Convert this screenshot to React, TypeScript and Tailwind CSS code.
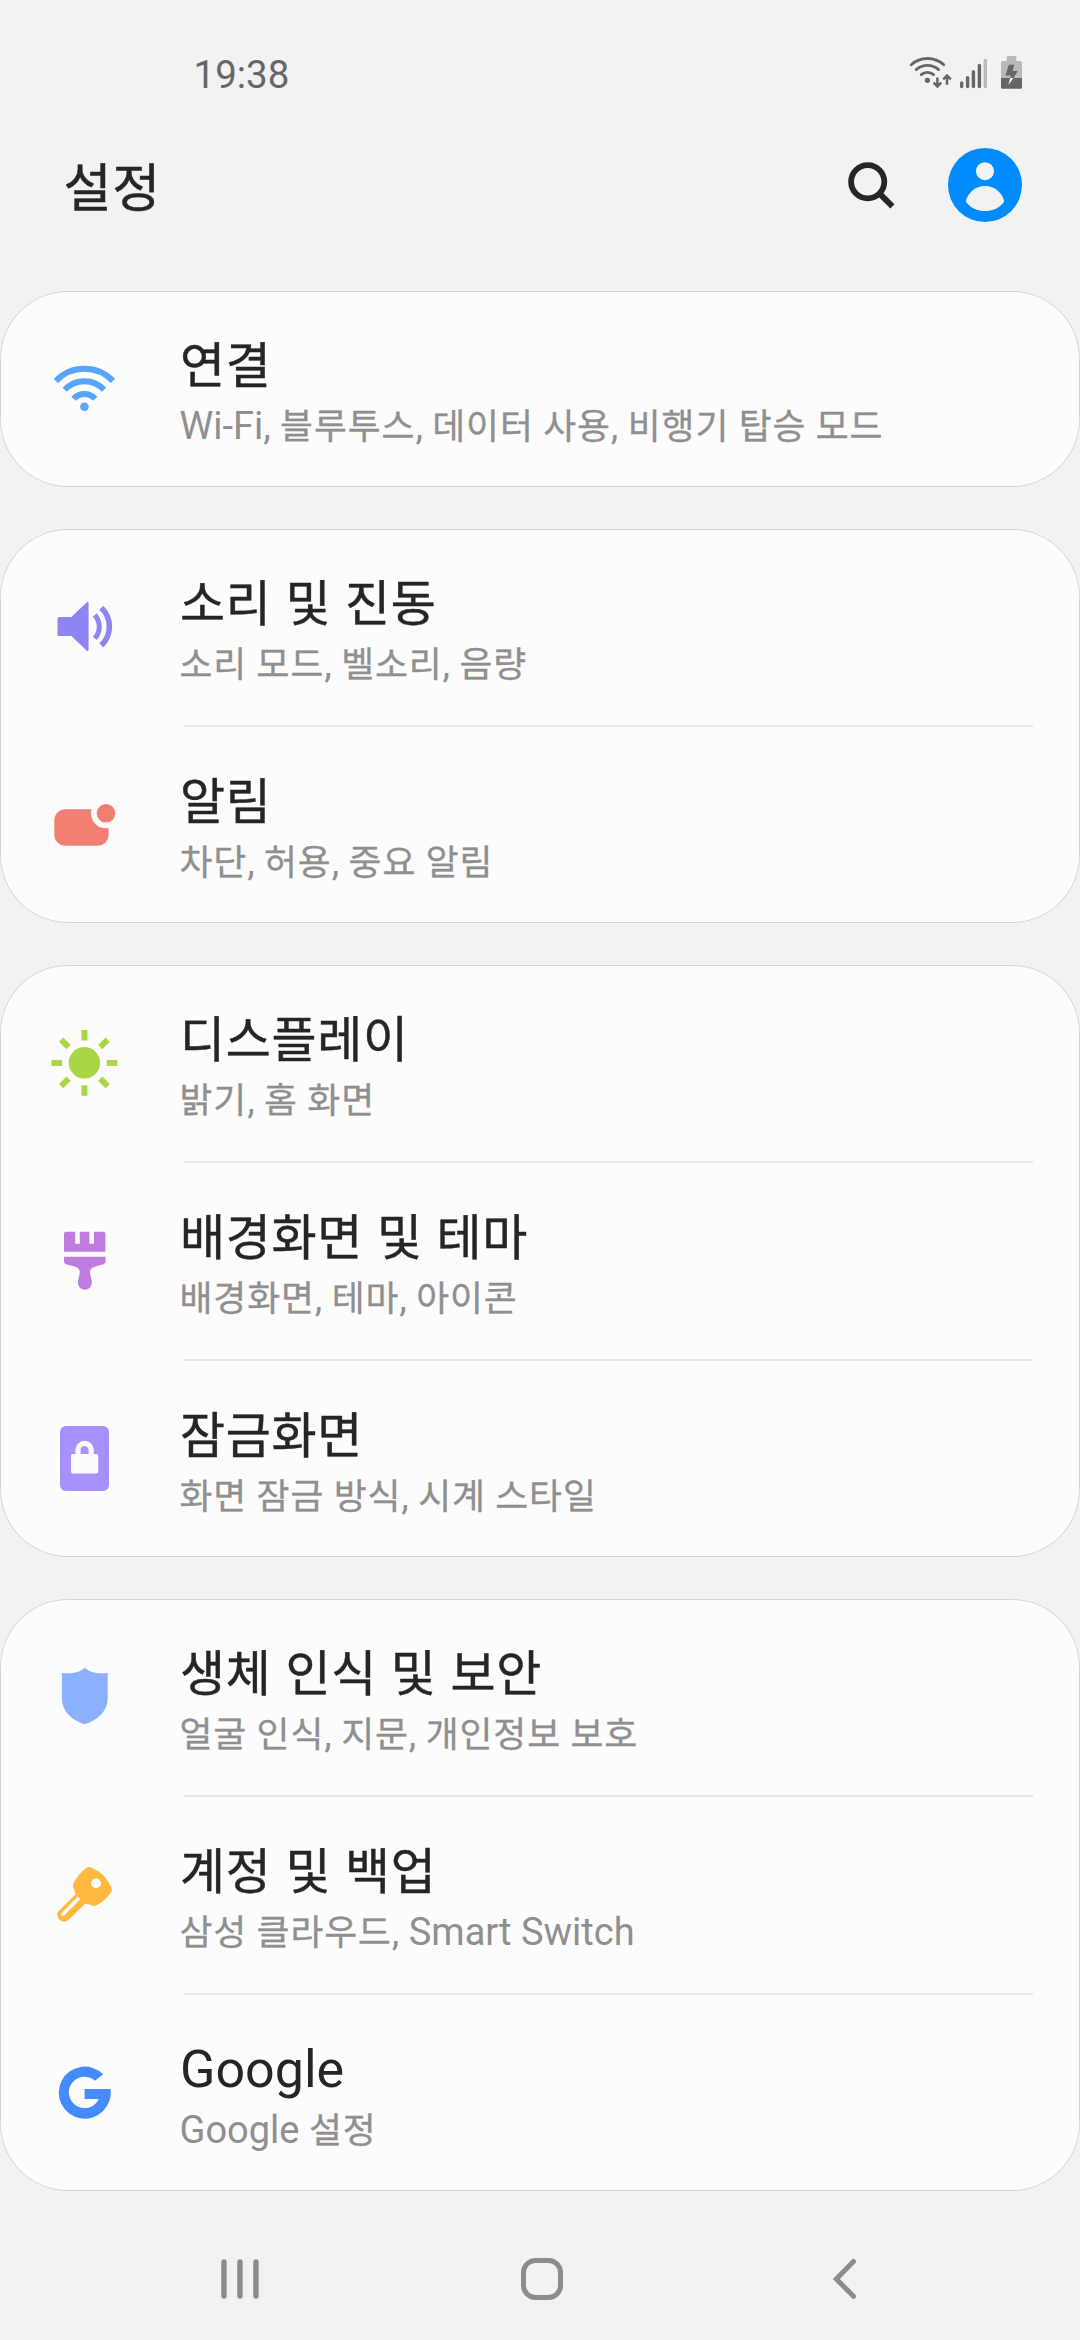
import type { ReactNode } from "react";

const HANGUL = /([\uac00-\ud7a3]+)/;

/* Latin runs are set in Roboto; Hangul runs in Noto Sans CJK, slightly smaller and heavier. */
function Label({ text }: { text: string }) {
  return (
    <>
      {text.split(HANGUL).map((part, i) =>
        HANGUL.test(part) ? (
          <span
            key={i}
            className="text-[0.942em] leading-none font-['Noto_Sans_CJK_KR',sans-serif] [-webkit-text-stroke:0.009em_currentColor]"
          >
            {part}
          </span>
        ) : (
          <span key={i} className="tracking-normal">
            {part}
          </span>
        ),
      )}
    </>
  );
}

function Icon({ children }: { children: ReactNode }) {
  return (
    <svg viewBox="0 0 84 84" className="h-[84px] w-[84px] shrink-0" fill="none">
      {children}
    </svg>
  );
}

const WifiIcon = (
  <Icon>
    <g stroke="#57a5ff" strokeWidth="6">
      <path d="M13.9 34A39.4 39.4 0 0 1 70.9 34" />
      <path d="M22.8 42.8A26.8 26.8 0 0 1 62 42.8" />
      <path d="M31.6 51.7A14.5 14.5 0 0 1 53.2 51.7" />
    </g>
    <circle cx="42.4" cy="59.7" r="4.3" fill="#57a5ff" />
  </Icon>
);

const SoundIcon = (
  <Icon>
    <path
      d="M17 32H29.4L44.6 17.4Q46.6 16 46.6 18.2V64.8Q46.6 67 44.6 65.6L29.4 51H17Q15.5 51 15.5 49.5V33.5Q15.5 32 17 32Z"
      fill="#8d86f2"
    />
    <path d="M52.8 30A17.4 17.4 0 0 1 52.8 53.3" stroke="#8d86f2" strokeWidth="5" />
    <path d="M59.3 22.8A25.9 25.9 0 0 1 59.3 60.4" stroke="#8d86f2" strokeWidth="5.6" />
  </Icon>
);

const NotificationIcon = (
  <Icon>
    <rect x="12.3" y="26.3" width="54.3" height="36.4" rx="10.5" fill="#f28072" />
    <circle cx="64" cy="30.3" r="15" fill="#fcfcfc" />
    <circle cx="64" cy="30.3" r="9.3" fill="#f28072" />
  </Icon>
);

const DisplayIcon = (
  <Icon>
    <circle cx="42.4" cy="41.8" r="15.7" fill="#a9d644" />
    {[0, 45, 90, 135, 180, 225, 270, 315].map((angle) => (
      <rect
        key={angle}
        x="39.4"
        y="9"
        width="6"
        height="10.5"
        fill="#a9d644"
        transform={`rotate(${angle} 42.4 41.9)`}
      />
    ))}
  </Icon>
);

const ThemeIcon = (
  <Icon>
    <path
      d="M24 12.7H33.2V24.7H37.8V12.7H47.4V24.7H52V12.7H61.4Q63.4 12.7 63.4 14.7V32.7H22V14.7Q22 12.7 24 12.7Z"
      fill="#c07be0"
    />
    <path
      d="M22 37.7H63.6V42.6Q63.6 44.7 61.6 45.3L54 47.2Q48 48.6 48 53C48 57 49.9 59.5 49.9 63.8A7 7 0 0 1 35.9 63.8C35.9 59.5 37.8 57 37.8 53Q37.8 48.6 32 47.2L24 45.3Q22 44.7 22 42.6Z"
      fill="#c07be0"
    />
  </Icon>
);

const LockIcon = (
  <Icon>
    <rect x="18" y="9" width="49" height="65" rx="6" fill="#a891ff" />
    <rect x="29" y="37" width="27.2" height="19.4" rx="2" fill="#fcfcfc" />
    <path d="M36 38V33A6.6 6.6 0 0 1 49.2 33V38" stroke="#fcfcfc" strokeWidth="5.2" />
  </Icon>
);

const ShieldIcon = (
  <Icon>
    <path
      d="M42.6 12.7C48 17.2 55 19.2 65.7 18V43.5C65.7 56 56 64.8 42.6 69.3C29.5 64.8 19.9 56 19.9 43.5V18C30.5 19.2 37.5 17.2 42.6 12.7Z"
      fill="#8bb0fd"
    />
  </Icon>
);

const KeyIcon = (
  <Icon>
    <path
      d="M46.8 14Q48.2 14 50 14.9Q63.5 20 69.4 34.6Q70.6 37.4 69.2 39.2Q63.4 47.5 54.6 52.2Q53 53.2 51.6 52.8L43.4 50.4L27 66.6Q22.6 70.8 17.6 66.8Q13.2 61.8 17 57.8L33.6 41.3L31 33.4Q30.6 32 31.4 30.4Q36 21.4 44.6 14.8Q45.6 14 46.8 14Z"
      fill="#ffb940"
    />
    <circle cx="54" cy="30.4" r="4.9" fill="#fcfcfc" />
    <path d="M21 61L36 46" stroke="#fcfcfc" strokeWidth="3.6" strokeLinecap="round" />
  </Icon>
);

const GoogleIcon = (
  <Icon>
    <path
      d="M61.1 23.2A26 26 0 1 0 68.5 38H42.6V48H56.8A15.7 15.7 0 1 1 53 29.7Z"
      fill="#468aff"
    />
  </Icon>
);

type Item = { title: string; detail: string; icon: ReactNode };

const groups: Item[][] = [
  [{ title: "연결", detail: "Wi-Fi, 블루투스, 데이터 사용, 비행기 탑승 모드", icon: WifiIcon }],
  [
    { title: "소리 및 진동", detail: "소리 모드, 벨소리, 음량", icon: SoundIcon },
    { title: "알림", detail: "차단, 허용, 중요 알림", icon: NotificationIcon },
  ],
  [
    { title: "디스플레이", detail: "밝기, 홈 화면", icon: DisplayIcon },
    { title: "배경화면 및 테마", detail: "배경화면, 테마, 아이콘", icon: ThemeIcon },
    { title: "잠금화면", detail: "화면 잠금 방식, 시계 스타일", icon: LockIcon },
  ],
  [
    { title: "생체 인식 및 보안", detail: "얼굴 인식, 지문, 개인정보 보호", icon: ShieldIcon },
    { title: "계정 및 백업", detail: "삼성 클라우드, Smart Switch", icon: KeyIcon },
    { title: "Google", detail: "Google 설정", icon: GoogleIcon },
  ],
];

function StatusIcons() {
  return (
    <svg viewBox="904 48 124 48" className="h-12 w-[124px]" fill="none">
      <g stroke="#666" strokeWidth="2.8" strokeLinecap="round">
        <path d="M911.2 64.7A24.5 24.5 0 0 1 943.8 64.7" />
        <path d="M916.2 69.6A17 17 0 0 1 938.6 69.6" />
        <path d="M921.2 74.6A9.5 9.5 0 0 1 933.6 74.6" />
      </g>
      <circle cx="927.4" cy="80.3" r="2.6" fill="#666" />
      <g stroke="#666" strokeWidth="2.5">
        <path d="M937.4 77.5V86M933.6 82.6L937.4 86.4L941.2 82.6" />
        <path d="M947 84.8V76M943.2 79.4L947 75.6L950.8 79.4" />
      </g>
      <g strokeWidth="3.4" strokeLinecap="round" stroke="#666">
        <path d="M961.7 83V86.6M967.6 77.6V86.6M973.4 71.6V86.6M979.4 65.5V86.6" />
        <path d="M985.3 60.4V86.6" stroke="#b9b9b9" />
      </g>
      <path
        d="M1007.7 56H1015.3Q1016.3 56 1016.3 57V61H1020.5Q1022 61 1022 62.5V78H1001V62.5Q1001 61 1002.5 61H1006.7V57Q1006.7 56 1007.7 56Z"
        fill="#b9b9b9"
      />
      <path d="M1001 78H1022V87.2Q1022 88.7 1020.5 88.7H1002.5Q1001 88.7 1001 87.2Z" fill="#666" />
      <path d="M1008.8 64.8H1014.4L1012.4 71H1017.8L1013.4 78H1010.2L1011 75.6H1005.4Z" fill="#666" />
      <path d="M1010.2 78H1013.4L1008.4 85Z" fill="#fff" />
    </svg>
  );
}

function Row({ item, first }: { item: Item; first: boolean }) {
  return (
    <>
      {!first && <div className="ml-[184px] mr-[47px] h-0.5 bg-[#e6e6e6]" />}
      <div className="flex h-[196px] items-center pl-[42px]">
        {item.icon}
        <div className="ml-[54px] flex flex-col whitespace-nowrap pt-[6px]">
          <div className="h-[67px] text-[52px] leading-[66px] tracking-[0.7px] text-[#252525] [word-spacing:1px]">
            <Label text={item.title} />
          </div>
          <div className="-ml-[0.5px] h-[52px] text-[38px] leading-[52px] tracking-[0.9px] text-[#8f8f8f]">
            <Label text={item.detail} />
          </div>
        </div>
      </div>
    </>
  );
}

export default function App() {
  return (
    <div className="flex h-[2340px] w-[1080px] flex-col overflow-hidden bg-[#f2f2f2] font-[Roboto,'Noto_Sans_CJK_KR',sans-serif]">
      <header className="flex h-[291px] shrink-0 flex-col">
        <div className="flex h-[100px] items-end justify-between pb-1 pl-[193.5px] pr-[52px]">
          <time className="-mb-[1.5px] text-[38.5px] leading-[46px] text-[#666]">19:38</time>
          <StatusIcons />
        </div>
        <div className="flex h-[170px] items-center justify-between pl-[63.5px] pr-[57px]">
          <h1 className="mt-[7px] text-[55.5px] leading-[72px] tracking-[0.6px] text-[#252525]">
            <Label text="설정" />
          </h1>
          <div className="flex items-center gap-[47px]">
            <svg
              viewBox="846 160 54 54"
              className="mt-1 h-[54px] w-[54px]"
              fill="none"
              stroke="#252525"
            >
              <circle cx="867.7" cy="181.7" r="16.6" strokeWidth="5.8" />
              <path d="M879.6 193.6L892.4 206.4" strokeWidth="5.8" />
            </svg>
            <svg viewBox="0 0 76 76" className="h-[76px] w-[76px]">
              <circle cx="38" cy="38" r="37" fill="#008cff" />
              <circle cx="38" cy="24.2" r="9" fill="#f2f2f2" />
              <path
                d="M38 39C48 39 55 46 57 53.6Q57.2 54.6 56.6 55.4C52 61 45.4 64 38 64S24 61 19.4 55.4Q18.8 54.6 19 53.6C21 46 28 39 38 39Z"
                fill="#f2f2f2"
              />
            </svg>
          </div>
        </div>
      </header>

      <main className="flex flex-col gap-[42px]">
        {groups.map((items, g) => (
          <section
            key={g}
            className="flex flex-col rounded-[68px] bg-[#fcfcfc] shadow-[inset_0_0_0_1px_#d5d5d5]"
          >
            {items.map((item, i) => (
              <Row key={item.title} item={item} first={i === 0} />
            ))}
          </section>
        ))}
      </main>

      <nav className="mt-[62px] flex items-center pl-[216px]">
        <svg
          viewBox="0 0 48 52"
          className="h-[52px] w-12"
          stroke="#8c8c8c"
          strokeWidth="5.4"
          strokeLinecap="round"
        >
          <path d="M8 9V43M24 9V43M40 9V43" />
        </svg>
        <svg
          viewBox="0 0 52 52"
          className="ml-[252px] h-[52px] w-[52px]"
          fill="none"
          stroke="#8c8c8c"
          strokeWidth="5"
        >
          <rect x="7.5" y="7.5" width="37" height="37" rx="12" />
        </svg>
        <svg
          viewBox="0 0 52 52"
          className="ml-[252px] h-[52px] w-[52px]"
          fill="none"
          stroke="#8c8c8c"
          strokeWidth="5"
          strokeLinecap="round"
        >
          <path d="M33.5 8.5L16.3 25.9L33.5 43.3" />
        </svg>
      </nav>
    </div>
  );
}
